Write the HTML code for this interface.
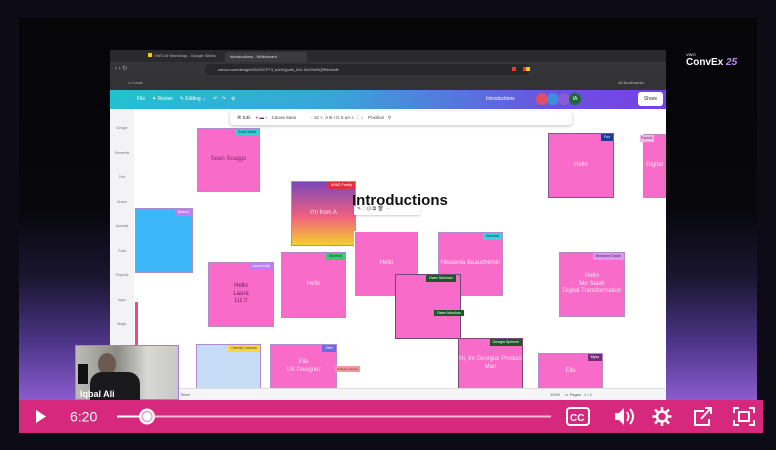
<!DOCTYPE html>
<html><head><meta charset="utf-8"><style>
*{margin:0;padding:0;box-sizing:border-box}
body{width:776px;height:450px;background:#0d0c16;position:relative;overflow:hidden;font-family:"Liberation Sans",sans-serif}
.a{position:absolute}
.frame{left:19px;top:18px;width:738px;height:382px;background:linear-gradient(#060609 0%,#07070c 50%,#1a1630 68%,#4c3588 85%,#8a5ccc 100%)}
.note{position:absolute;background:#f96bc8;border:1px solid #b08acc;color:#fbe2f3;font-size:6px;text-align:center;display:flex;align-items:center;justify-content:center;line-height:1.3}
.tag{position:absolute;right:0;top:0;font-size:3.5px;padding:1px 3px;color:#fff}
.ctl{left:19px;top:400px;width:744px;height:33px;background:#d6287c}
</style></head><body>
<div class="a frame"></div>
<div class="a" style="left:686px;top:52px;color:#fff;font-size:4px">VWO</div>
<div class="a" style="left:686px;top:57px;color:#fff;font-size:10px;font-weight:bold;letter-spacing:0">ConvEx <span style="color:#b48cf0;font-style:italic">25</span></div>

<!-- screen -->
<div class="a" style="left:110px;top:50px;width:556px;height:350px;background:#fff"></div>
<div class="a" style="left:110px;top:50px;width:556px;height:12px;background:#2a2a2d"></div>
<div class="a" style="left:148px;top:53px;width:4px;height:4px;background:#f5c518"></div>
<div class="a" style="left:154px;top:53px;font-size:4px;color:#bbb">VWO AI Workshop - Google Slides</div>
<div class="a" style="left:225px;top:52px;width:82px;height:10px;background:#3c3c40;border-radius:2px 2px 0 0"></div>
<div class="a" style="left:230px;top:54px;font-size:4px;color:#ddd">Introductions - Whiteboard</div>
<div class="a" style="left:110px;top:62px;width:556px;height:15px;background:#353539"></div>
<div class="a" style="left:115px;top:65px;font-size:6px;color:#aaa">‹ › ↻</div>
<div class="a" style="left:205px;top:64px;width:325px;height:11px;background:#28282b;border-radius:6px"></div>
<div class="a" style="left:218px;top:67px;font-size:4px;color:#ccc">canva.com/design/DAGSCFY3_bA/4Qpolk_IAX-3nZXsRtQRNA/edit</div>
<div class="a" style="left:512px;top:67px;width:4px;height:4px;background:#e04030"></div>
<div class="a" style="left:523px;top:67px;width:4px;height:4px;background:#e83838"></div>
<div class="a" style="left:526px;top:67px;width:4px;height:4px;background:#f5c518"></div>
<div class="a" style="left:110px;top:77px;width:556px;height:13px;background:#333336"></div>
<div class="a" style="left:128px;top:80px;font-size:4px;color:#bbb">▭ Local</div>
<div class="a" style="left:618px;top:80px;font-size:4px;color:#bbb">All Bookmarks</div>
<div class="a" style="left:110px;top:90px;width:556px;height:19px;background:linear-gradient(90deg,#22c1cf,#3aa5d8 40%,#6a52e0 80%,#7a3ee6)"></div>
<div class="a" style="left:137px;top:96px;font-size:5px;color:#fff">File &nbsp;&nbsp;&nbsp; ✦ Resize &nbsp;&nbsp;&nbsp; ✎ Editing ⌄ &nbsp;&nbsp;&nbsp; ↶ &nbsp; ↷ &nbsp;&nbsp; ⊘</div>
<div class="a" style="left:486px;top:96px;font-size:5px;color:#fff">Introductions</div>
<div class="a" style="left:536px;top:93px;width:12px;height:12px;border-radius:50%;background:#e0506a"></div>
<div class="a" style="left:547px;top:93px;width:12px;height:12px;border-radius:50%;background:#3d8de0"></div>
<div class="a" style="left:558px;top:93px;width:12px;height:12px;border-radius:50%;background:#8a5ad8"></div>
<div class="a" style="left:569px;top:93px;width:12px;height:12px;border-radius:50%;background:#1f6a3a;color:#fff;font-size:5px;text-align:center;line-height:12px">IA</div>
<div class="a" style="left:638px;top:92px;width:25px;height:14px;border-radius:3px;background:#fff;font-size:5px;color:#333;text-align:center;line-height:14px">Share</div>
<div class="a" style="left:110px;top:109px;width:24px;height:283px;background:#f3f3f6"></div>
<div class="a" style="left:113px;top:116px;font-size:3.5px;color:#777;line-height:24.5px;text-align:center;width:18px">Design<br>Elements<br>Text<br>Brand<br>Uploads<br>Tools<br>Projects<br>Apps<br>Magic</div>
<div class="a" style="left:135px;top:302px;width:3px;height:95px;background:#e84f7e"></div>
<div class="a" style="left:230px;top:111px;width:342px;height:14px;background:#fff;box-shadow:0 1px 3px rgba(0,0,0,.25);border-radius:3px"></div>
<div class="a" style="left:237px;top:115px;font-size:4.5px;color:#444">⌘ Edit &nbsp;&nbsp; <span style="color:#f4b">●</span> ▬ ⌐ &nbsp; Canva Sans &nbsp;&nbsp;&nbsp;&nbsp;&nbsp;&nbsp;&nbsp;&nbsp;&nbsp;&nbsp; - 12 + &nbsp;A B I U S aA ≡ ⋮ ↕ &nbsp;&nbsp; Position &nbsp; ⚲</div>

<div class="note" style="left:197px;top:128px;width:63px;height:64px;color:#8a2a70">Sean Scaggs<div class="tag" style="background:#3ccbd5;color:#134">Grant Wells</div></div>
<div class="note" style="left:135px;top:208px;width:58px;height:65px;background:#3cb6f6"><div class="tag" style="background:#c07ef0">Beaver</div></div>
<div class="note" style="left:291px;top:181px;width:65px;height:65px;background:linear-gradient(#7a48b8,#f06080 55%,#f5d030);border-color:#e08a40">I'm from A<div class="tag" style="background:#e03040">ANAD Family</div></div>
<div class="note" style="left:208px;top:262px;width:66px;height:65px;color:#6a2050">Hello<br>Laura<br>Liz !!<div class="tag" style="background:#c07ef0">Laura Kelly</div></div>
<div class="note" style="left:281px;top:252px;width:65px;height:66px">Hello<div class="tag" style="background:#3cc870;color:#134">Wombat</div></div>
<div class="note" style="left:354px;top:231px;width:65px;height:66px;border-color:#fff">Hello</div>
<div class="note" style="left:438px;top:232px;width:65px;height:64px">Hikalenia Beauchemin<div class="tag" style="background:#3cd0e0;color:#134">Wombat</div></div>
<div class="note" style="left:395px;top:274px;width:66px;height:65px;border-color:#6a4a7a"><div class="tag" style="background:#1a5a2a;left:30px;right:auto">Owen Morchan</div></div>
<div class="a" style="left:434px;top:310px;background:#1a5a2a;color:#fff;font-size:3.5px;padding:1px 3px">Owen Morchan</div>
<div class="note" style="left:548px;top:133px;width:66px;height:65px;border-color:#7a5a9a">Hello<div class="tag" style="background:#1e3a9a">Fox</div></div>
<div class="note" style="left:643px;top:134px;width:23px;height:64px">Digital<div class="a" style="left:-4px;top:0;font-size:3.5px;background:#f0b8ea;color:#735;padding:1px">Pauline</div></div>
<div class="note" style="left:559px;top:252px;width:66px;height:65px">Hello<br>Mo Salah<br>Digital Transformation<div class="tag" style="background:#d89af0;color:#424">Mohamed Salah</div></div>
<div class="note" style="left:458px;top:338px;width:65px;height:52px;border-color:#7a4a7a">Hi, Im Georgia! Product Man<div class="tag" style="background:#1a5a2a">Georgia Spencer</div></div>
<div class="note" style="left:538px;top:353px;width:65px;height:37px">Ella<div class="tag" style="background:#7a2a7a">Myka</div></div>
<div class="note" style="left:196px;top:344px;width:65px;height:46px;background:#c6dbf6"><div class="tag" style="background:#f5d840;color:#543">Claretty Calcado</div></div>
<div class="note" style="left:270px;top:344px;width:67px;height:46px">Ella<br>UX Designer<div class="tag" style="background:#6a6ae8">Otter</div></div>
<div class="a" style="left:335px;top:366px;font-size:3px;background:#f09aa0;color:#822;padding:1px 2px">Unilever pricing</div>
<div class="a" style="left:352px;top:192px;font-size:15px;font-weight:bold;color:#111">Introductions</div>
<div class="a" style="left:354px;top:206px;width:66px;height:9px;background:#fff;box-shadow:0 1px 2px rgba(0,0,0,.2);font-size:5px;color:#555;padding-left:3px">✎ ◌ ⊡ ⧉ 🗑 ⋯</div>
<div class="a" style="left:110px;top:388px;width:556px;height:12px;background:#f5f5f7;border-top:1px solid #e0e0e0"></div>
<div class="a" style="left:180px;top:392px;font-size:4px;color:#555">Timer</div>
<div class="a" style="left:550px;top:392px;font-size:4px;color:#555">100% &nbsp;&nbsp; ▭ Pages &nbsp; 1 / 1</div>

<!-- webcam -->
<div class="a" style="left:75px;top:345px;width:104px;height:55px;background:linear-gradient(90deg,#bdbdb8,#8a8a86 40%,#d8d8d4 70%,#c8c8c4);border:1px solid #a27ce6"></div>
<div class="a" style="left:98px;top:353px;width:18px;height:22px;border-radius:50%;background:#6a5a50"></div>
<div class="a" style="left:90px;top:372px;width:50px;height:28px;border-radius:12px 12px 0 0;background:#1a1a1c"></div>
<div class="a" style="left:78px;top:364px;width:10px;height:20px;background:#111"></div>
<div class="a" style="left:80px;top:389px;font-size:9px;color:#fff;font-weight:bold">Iqbal Ali</div>

<!-- control bar -->
<div class="a ctl"></div>
<svg class="a" style="left:19px;top:400px" width="744" height="33" viewBox="0 0 744 33">
<path d="M17 10 L27 16.5 L17 23 Z" fill="#fff"/>
<text x="51" y="21.5" fill="#fff" font-size="14" font-family="Liberation Sans">6:20</text>
<line x1="98" y1="16.5" x2="532" y2="16.5" stroke="#f6b8d4" stroke-width="2"/>
<line x1="98" y1="16.5" x2="128" y2="16.5" stroke="#fff" stroke-width="2"/>
<circle cx="128" cy="16.5" r="8" fill="#fff"/><circle cx="128" cy="16.5" r="5" fill="none" stroke="#f07ab0" stroke-width="1"/>
<rect x="548" y="8" width="22" height="17" rx="3" fill="none" stroke="#fff" stroke-width="2"/>
<text x="551" y="21" fill="#fff" font-size="10" font-weight="bold" font-family="Liberation Sans">CC</text>
<path d="M596 13 h4 l5 -5 v17 l-5 -5 h-4 z" fill="#fff"/>
<path d="M608 12 q3 4.5 0 9 M611 9 q6 7.5 0 15" fill="none" stroke="#fff" stroke-width="2"/>
<circle cx="643" cy="16.5" r="5" fill="none" stroke="#fff" stroke-width="2.5"/>
<path d="M643 7v4M643 22v4M633.5 16.5h4M648.5 16.5h4M636 9.5l3 3M647 20.5l3 3M636 23.5l3-3M647 12.5l3-3" stroke="#fff" stroke-width="2.5"/>
<path d="M685 11 h-9 v14 h14 v-6" fill="none" stroke="#fff" stroke-width="2"/>
<path d="M682 19 l10 -11 M686 8 h6 v6" fill="none" stroke="#fff" stroke-width="2"/>
<path d="M715 13v-5h5M730 8h5v5M735 20v5h-5M720 25h-5v-5" fill="none" stroke="#fff" stroke-width="2"/>
<rect x="720" y="12" width="10" height="9" fill="none" stroke="#fff" stroke-width="2"/>
</svg>
</body></html>
